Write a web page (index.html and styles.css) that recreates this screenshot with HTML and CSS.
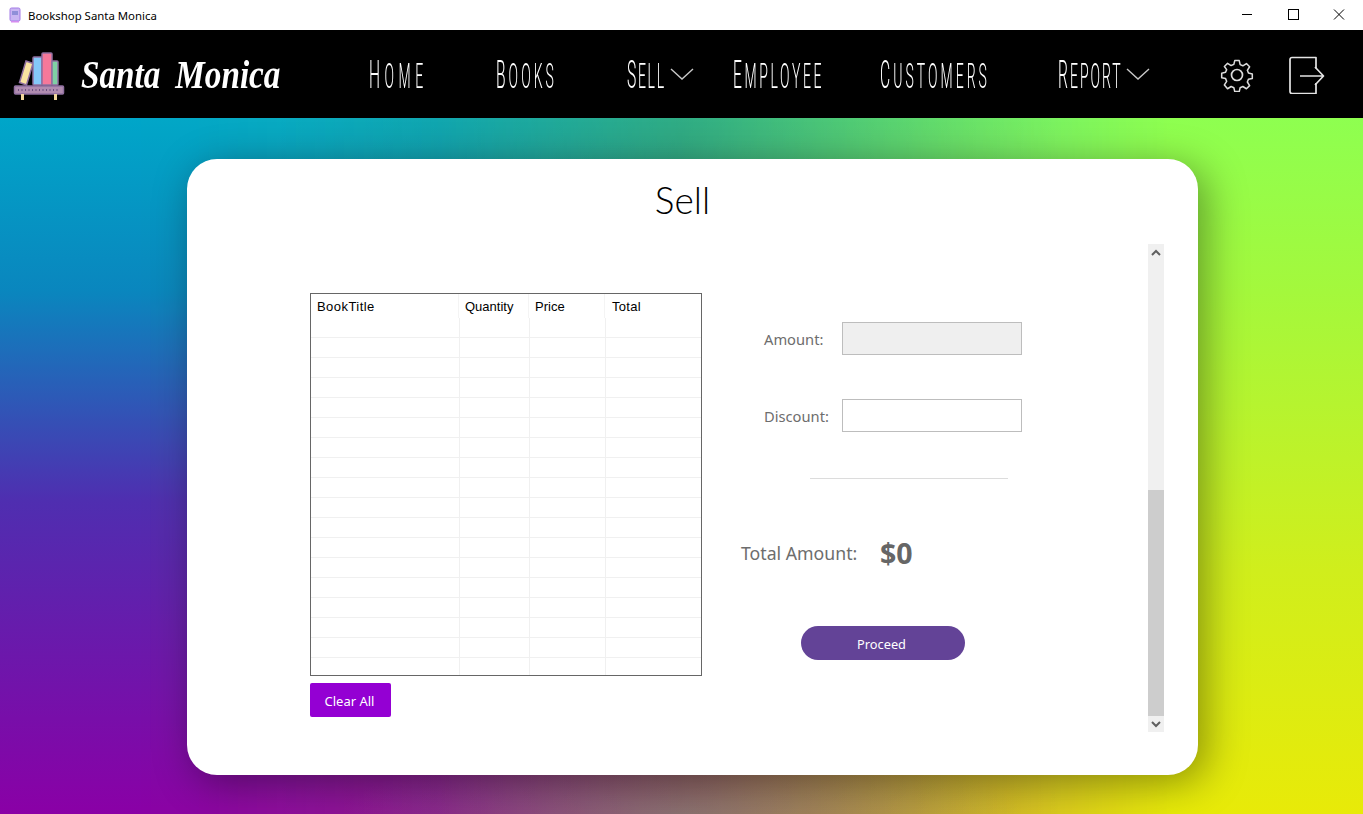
FILE: index.html
```html
<!DOCTYPE html>
<html lang="en">
<head>
<meta charset="utf-8">
<title>Bookshop Santa Monica</title>
<link rel="stylesheet" href="styles.css">
</head>
<body>
<div class="window">
  <header class="titlebar">
    <svg class="favicon" viewBox="0 0 16 16" width="16" height="16"><rect x="3" y="1" width="10" height="13" rx="1.5" fill="#c9b6f2" stroke="#a37be6"/><rect x="5" y="4" width="6" height="4" fill="#8f8fd8"/><rect x="4" y="14" width="8" height="1.5" fill="#d58cf0"/></svg>
    <span class="titlebar-text">Bookshop Santa Monica</span>
    <div class="win-controls">
      <svg class="win-btn" width="46" height="30" viewBox="0 0 46 30"><path d="M18 14.500h10" stroke="#000" fill="none"/></svg>
      <svg class="win-btn" width="46" height="30" viewBox="0 0 46 30"><rect x="18.500" y="9.500" width="10" height="10" stroke="#000" fill="none"/></svg>
      <svg class="win-btn" width="46" height="30" viewBox="0 0 46 30"><path d="M18 9.500l10 10M28 9.500l-10 10" stroke="#000" fill="none"/></svg>
    </div>
  </header>

  <nav class="navbar">
    <div class="brand">
      <svg class="brand-logo" width="52" height="52" viewBox="0 0 52 52">
        <g stroke="#8f6fa0" stroke-width="1.500">
          <path d="M13 13l7 2.500-6.500 21.500-7-2.500z" fill="#f8e3a0"/>
          <rect x="20" y="9" width="9" height="28" rx="1" fill="#84c8f8"/>
          <rect x="29" y="5" width="10" height="32" rx="1" fill="#f5789a"/>
          <rect x="39" y="13" width="6" height="24" rx="1" fill="#7fd0a4"/>
          <rect x="1.500" y="38" width="49" height="8" rx="1" fill="#b08cb0"/>
        </g>
        <rect x="8" y="46" width="3" height="6" fill="#f2d79c"/>
        <rect x="41" y="46" width="3" height="6" fill="#f2d79c"/>
        <path d="M5 42h42" stroke="#6b5080" stroke-width="2" stroke-dasharray="1 2.500"/>
      </svg>
      <span class="brand-name">Santa Monica</span>
    </div>
    <ul class="nav-list">
      <li class="nav-item"><span class="nav-link nav-home">Home</span></li>
      <li class="nav-item"><span class="nav-link nav-books">Books</span></li>
      <li class="nav-item"><span class="nav-link nav-sell">Sell</span><svg class="chev" width="24" height="12" viewBox="0 0 24 12"><path d="M1 1l11 10L23 1" fill="none" stroke="#c8c8c8" stroke-width="1.400"/></svg></li>
      <li class="nav-item"><span class="nav-link nav-employee">Employee</span></li>
      <li class="nav-item"><span class="nav-link nav-customers">Customers</span></li>
      <li class="nav-item"><span class="nav-link nav-report">Report</span><svg class="chev" width="24" height="12" viewBox="0 0 24 12"><path d="M1 1l11 10L23 1" fill="none" stroke="#c8c8c8" stroke-width="1.400"/></svg></li>
      <li class="nav-item">
        <svg width="34" height="36" viewBox="0 0 34 36" fill="none" stroke="#dcdcdc" stroke-width="1.700" stroke-linejoin="round"><circle cx="17" cy="19" r="5.500"/><path d="M14.500 2h5l1 4.500 3 1.300 4-2.500 3.500 3.500-2.500 4 1.200 3 4.300 1v5l-4.300 1-1.200 3 2.500 4-3.500 3.500-4-2.500-3 1.300-1 4.300h-5l-1-4.300-3-1.300-4 2.500L3 29l2.500-4-1.200-3-4.300-1v-5l4.300-1 1.200-3L3 8.500 6.500 5l4 2.500 3-1.300z" transform="translate(1.700 2.800) scale(.9)"/></svg>
      </li>
      <li class="nav-item">
        <svg width="37" height="40" viewBox="0 0 37 40" fill="none" stroke="#e4e4e4" stroke-width="1.700" stroke-linejoin="round"><path d="M27 14.500V3.500H3a2 2 0 0 0-2 2v32a2 2 0 0 0 2 2h24V29"/><path d="M11 22h23.500M26 13l8.500 9-8.500 9"/></svg>
      </li>
    </ul>
  </nav>

  <main class="stage">
    <section class="card">
      <h1 class="card-title">Sell</h1>
      <div class="panel">
        <div class="panel-content">
          <div class="left-col">
            <div class="grid-box">
              <table class="grid">
                <colgroup><col class="col-title"><col class="col-qty"><col class="col-price"><col></colgroup>
                <thead>
                  <tr><th>BookTitle</th><th>Quantity</th><th>Price</th><th>Total</th></tr>
                </thead>
                <tbody>
                  <tr><td></td><td></td><td></td><td></td></tr>
                  <tr><td></td><td></td><td></td><td></td></tr>
                  <tr><td></td><td></td><td></td><td></td></tr>
                  <tr><td></td><td></td><td></td><td></td></tr>
                  <tr><td></td><td></td><td></td><td></td></tr>
                  <tr><td></td><td></td><td></td><td></td></tr>
                  <tr><td></td><td></td><td></td><td></td></tr>
                  <tr><td></td><td></td><td></td><td></td></tr>
                  <tr><td></td><td></td><td></td><td></td></tr>
                  <tr><td></td><td></td><td></td><td></td></tr>
                  <tr><td></td><td></td><td></td><td></td></tr>
                  <tr><td></td><td></td><td></td><td></td></tr>
                  <tr><td></td><td></td><td></td><td></td></tr>
                  <tr><td></td><td></td><td></td><td></td></tr>
                  <tr><td></td><td></td><td></td><td></td></tr>
                  <tr><td></td><td></td><td></td><td></td></tr>
                  <tr><td></td><td></td><td></td><td></td></tr>
                  <tr><td></td><td></td><td></td><td></td></tr>
                </tbody>
              </table>
            </div>
            <button class="btn-clear" type="button">Clear All</button>
          </div>
          <div class="right-col">
            <div class="field field-amount">
              <label class="field-label">Amount:</label>
              <input class="field-input field-input-disabled" type="text" disabled>
            </div>
            <div class="field field-discount">
              <label class="field-label">Discount:</label>
              <input class="field-input" type="text">
            </div>
            <div class="divider"></div>
            <div class="total">
              <span class="total-label">Total Amount:</span>
              <span class="total-value">$0</span>
            </div>
            <button class="btn-proceed" type="button">Proceed</button>
          </div>
        </div>
        <div class="scrollbar">
          <svg class="scroll-arrow" width="16" height="17" viewBox="0 0 16 17"><path d="M4 11l4-4 4 4" fill="none" stroke="#606060" stroke-width="2"/></svg>
          <div class="scroll-space"></div>
          <div class="scroll-thumb"></div>
          <svg class="scroll-arrow" width="16" height="16" viewBox="0 0 16 16"><path d="M4 6l4 4 4-4" fill="none" stroke="#606060" stroke-width="2"/></svg>
        </div>
      </div>
    </section>
  </main>
</div>
</body>
</html>
```

FILE: styles.css
```css
* { box-sizing: border-box; }
html, body { margin: 0; padding: 0; height: 100%; overflow: hidden; }
body { font-family: "Noto Sans", sans-serif; background: #fff; }
.window { width: 1363px; height: 814px; display: flex; flex-direction: column; }

.titlebar { height: 30px; flex: none; display: flex; align-items: center; background: #fff; padding-left: 7px; }
.favicon { flex: none; }
.titlebar-text { margin-left: 5px; font-size: 11.400px; color: #000; font-family: "Noto Sans", sans-serif; }
.win-controls { margin-left: auto; display: flex; padding-right: 1px; }
.win-btn { display: block; }

.navbar { height: 88px; flex: none; background: #000; display: flex; align-items: center; }
.brand { width: 369px; flex: none; display: flex; align-items: center; padding-left: 13px; }
.brand-logo { flex: none; }
.brand-name { display: inline-block; margin-left: 16px; font-family: "Liberation Serif", serif; font-style: italic; font-weight: 700; font-size: 40px; word-spacing: 8px; color: #fff; white-space: nowrap; transform-origin: left center; transform: scaleX(.83); }

.nav-list { list-style: none; margin: 0; padding: 0; display: grid; grid-template-columns: 127px 131px 106px 147px 178px 162px 69px 37px; align-items: center; }
.nav-item { display: flex; align-items: center; height: 88px; }
.nav-link { display: inline-block; padding-top: 2px; font-family: "Roboto", sans-serif; font-weight: 300; font-size: 35px; text-transform: uppercase; color: #fff; transform-origin: left center; transform: scaleX(.4); white-space: nowrap; }
.nav-link::first-letter { font-size: 39px; }
.nav-home { letter-spacing: 11.300px; }
.nav-books { letter-spacing: 7.600px; }
.nav-sell { width: 43px; letter-spacing: 4.200px; }
.nav-employee { letter-spacing: 6.600px; }
.nav-customers { letter-spacing: 7.600px; }
.nav-report { width: 68px; letter-spacing: 5px; }
.chev { flex: none; }

.stage { flex: 1; display: flex; justify-content: flex-start; padding: 41px 0 39px 187px; position: relative; background: linear-gradient(to bottom, #00a6c9 0%, #0a86be 25%, #4f2eb0 55%, #8a00a6 100%); }
.stage::before { content: ""; position: absolute; inset: 0; background: linear-gradient(to bottom, #8eff50 0%, #a4f83c 25%, #d0ee1c 65%, #e8ea08 100%); -webkit-mask-image: linear-gradient(to right, transparent 10%, rgba(0,0,0,.12) 32%, rgba(0,0,0,.42) 52%, rgba(0,0,0,.75) 70%, #000 86%); mask-image: linear-gradient(to right, transparent 10%, rgba(0,0,0,.12) 32%, rgba(0,0,0,.42) 52%, rgba(0,0,0,.75) 70%, #000 86%); }
.stage::after { content: ""; position: absolute; inset: 0; background: radial-gradient(ellipse 340px 70px at 50% 100%, rgba(120,170,150,.38), transparent), linear-gradient(to right, transparent 20%, rgba(0,0,0,.14) 50%, transparent 78%); }

.card { position: relative; z-index: 1; width: 1011px; height: 616px; background: #fff; border-radius: 30px; box-shadow: 8px 8px 40px rgba(0,0,0,.38); display: flex; flex-direction: column; }
.card-title { margin: 18px 0 0; padding-right: 20px; text-align: center; font-family: "Lato", sans-serif; font-weight: 300; font-size: 37px; line-height: 46px; color: #000; height: 67px; }
.panel { display: flex; height: 488px; margin-right: 34px; }
.panel-content { flex: 1; display: flex; padding: 49px 0 0 123px; }
.left-col { width: 392px; flex: none; }
.grid-box { width: 392px; height: 383px; border: 1px solid #666; overflow: hidden; background: #fff; }
.grid { width: 390px; border-collapse: separate; border-spacing: 0; table-layout: fixed; font-family: "Liberation Sans", sans-serif; }
.col-title { width: 149px; }
.col-qty { width: 70px; }
.col-price { width: 76px; }
.grid th { height: 24px; padding: 0 0 0 5px; font-weight: 400; font-size: 13px; color: #000; text-align: left; border-right: 1px solid transparent; position: relative; vertical-align: middle; }
.grid th::after { content: ""; position: absolute; top: 0; bottom: 0; right: 0; width: 1px; background: #f4f4f4; }
.grid th:first-child { padding-left: 6px; letter-spacing: .45px; }
.grid th:last-child { padding-left: 6px; letter-spacing: .3px; }
.grid th:last-child::after { display: none; }
.grid th:last-child, .grid td:last-child { border-right: 0; }
.grid td { height: 20px; padding: 0; border-right: 1px solid #f0f0f0; border-bottom: 1px solid #f0f0f0; }
.btn-clear { display: block; margin-top: 7px; width: 81px; height: 34px; background: #9400d3; border: 0; border-radius: 2px; color: #fff; font-family: "Noto Sans", sans-serif; font-size: 13px; padding: 2px 2px 0 0; }

.right-col { width: 330px; padding-left: 39px; display: flex; flex-direction: column; align-items: flex-start; }
.field { display: flex; align-items: center; height: 33px; }
.field-amount { margin-top: 29px; }
.field-discount { margin-top: 44px; }
.field-label { width: 78px; margin-left: 23px; flex: none; font-size: 14.700px; color: #6d6d6d; }
.field-input { width: 180px; height: 33px; border: 1px solid #bdbdbd; background: #fff; padding: 0; margin: 0; display: block; }
.field-input-disabled { background: #efefef; }
.divider { margin: 46px 0 0 69px; width: 198px; height: 1px; background: #dcdcdc; }
.total { margin-top: 54px; height: 40px; display: flex; align-items: center; }
.total-label { width: 139px; font-size: 17.700px; color: #6d6d6d; }
.total-value { font-size: 28.500px; font-weight: 700; color: #666; }
.btn-proceed { margin: 53px 0 0 60px; width: 164px; height: 34px; background: #634397; border: 0; border-radius: 17px; color: #fff; font-family: "Noto Sans", sans-serif; font-size: 12.800px; padding: 2px 3px 0 0; }

.scrollbar { width: 16px; flex: none; background: #f0f0f0; display: flex; flex-direction: column; }
.scroll-arrow { display: block; flex: none; }
.scroll-space { flex: 1; }
.scroll-thumb { height: 226px; flex: none; background: #cdcdcd; }
```
